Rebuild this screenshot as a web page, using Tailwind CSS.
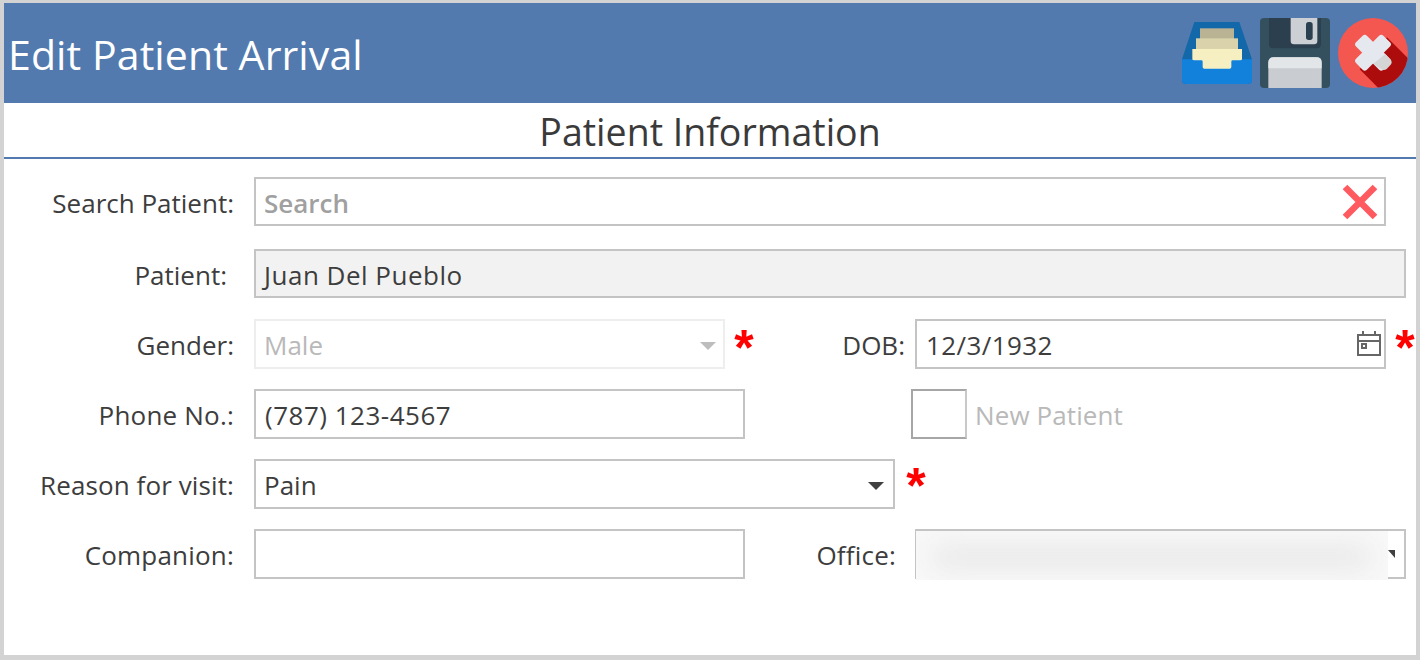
<!DOCTYPE html>
<html lang="en">
<head>
    <meta charset="UTF-8">
    <title>Edit Patient Arrival</title>
    <script src="https://cdn.jsdelivr.net/npm/@tailwindcss/browser@4"></script>
</head>
<body class="bg-[#d3d3d3] font-['Open_Sans',sans-serif] text-[#3d3d3d] overflow-hidden">
    <div class="mt-[3px] mx-[4px] h-[652px] w-[1412px] bg-white overflow-hidden">

        <!-- Header -->
        <div class="h-[100px] bg-[#527aae] flex items-center pl-[4px] pr-[8px]">
            <h1 class="text-[41px] leading-none text-white pt-[3px] tracking-[0.1px]">Edit Patient Arrival</h1>
            <div class="ml-auto flex items-center gap-[8px]">
                <button>
                    <svg width="70" height="62" viewBox="66 66 210 186" class="block">
                        <path d="M103 66H238L276 178V240Q276 252 264 252H78Q66 252 66 240V178Z" fill="#1268a8"/>
                        <rect x="120" y="85" width="102" height="32" fill="#b9b293"/>
                        <rect x="108" y="115" width="126" height="34" fill="#d9d2aa"/>
                        <path d="M66 178H276V240Q276 252 264 252H78Q66 252 66 240Z" fill="#1281dc"/>
                        <path d="M97 147H246V178Q246 181 240 181H218Q214 181 214 185V201Q214 206 209 206H133Q128 206 128 201V185Q128 181 124 181H103Q97 181 97 178Z" fill="#f5efc2"/>
                    </svg>
                </button>
                <button>
                    <svg width="70" height="70" viewBox="300 54 210 210" class="block">
                        <rect x="300" y="54" width="210" height="210" rx="12" fill="#34505f"/>
                        <path d="M327 54H483V133Q483 145 471 145H339Q327 145 327 133Z" fill="#2c3f4e"/>
                        <path d="M392 54H472V123Q472 133 462 133H402Q392 133 392 123Z" fill="#ccd0d4"/>
                        <rect x="438" y="66" width="20" height="54" rx="8" fill="#2c3f4e"/>
                        <path d="M325 264V188Q325 172 341 172H469Q485 172 485 188V264Z" fill="#c9cdd1"/>
                        <path d="M325 205V188Q325 172 341 172H469Q485 172 485 188V205Z" fill="#e2e6e8"/>
                    </svg>
                </button>
                <button>
                    <svg width="70" height="70" viewBox="533 54 210 210" class="block">
                        <defs><clipPath id="circleClip"><circle cx="638" cy="159" r="105"/></clipPath></defs>
                        <circle cx="638" cy="159" r="105" fill="#f45750"/>
                        <path d="M680 112L790 222L690 300L598 208Z" fill="#ad0c0c" clip-path="url(#circleClip)"/>
                        <rect x="580" y="135" width="116" height="46" rx="9" fill="#e5e8ef" transform="rotate(45 638 158)"/>
                        <rect x="580" y="135" width="116" height="46" rx="9" fill="#e5e8ef" transform="rotate(-45 638 158)"/>
                        <path d="M639 191L675 162L691 179Q697 187 691 194L679 207Q671 213 662 207Z" fill="#d5d5d5"/>
                    </svg>
                </button>
            </div>
        </div>

        <!-- Section title -->
        <div class="h-[56px] border-b-2 border-[#527aae] flex items-center justify-center">
            <h2 class="text-[37.5px] leading-none text-[#3a3a3a] pt-[3px]">Patient Information</h2>
        </div>

        <!-- Form -->
        <div class="text-[26px] leading-none">
            <div class="flex items-center h-[49px] mt-[18px]">
                <label class="w-[230px] text-right pt-[2px]">Search Patient:</label>
                <div class="relative ml-[20px] w-[1132px] h-full border-2 border-[#c4c4c4] flex items-center pl-[8px] pt-[2px] font-semibold text-[#a0a0a0]">
                    Search
                    <svg width="36" height="36" viewBox="0 0 36 36" class="absolute right-[6px] top-[5px]">
                        <path d="M3 3L33 33M33 3L3 33" stroke="#ff5a5f" stroke-width="6.5" fill="none"/>
                    </svg>
                </div>
            </div>

            <div class="flex items-center h-[49px] mt-[23px]">
                <label class="w-[223px] text-right pt-[2px]">Patient:</label>
                <div class="ml-[27px] w-[1152px] h-full border-2 border-[#c4c4c4] bg-[#f2f2f2] flex items-center pl-[8px] pt-[2px] tracking-[0.5px]">Juan Del Pueblo</div>
            </div>

            <div class="flex items-center h-[50px] mt-[21px]">
                <label class="w-[230px] text-right pt-[2px]">Gender:</label>
                <div class="relative ml-[20px] w-[471px] h-full border-2 border-[#eeeeee] flex items-center pl-[8px] pt-[2px] text-[#b9b9b9]">
                    Male
                    <span class="absolute right-[7px] top-[21px] w-0 h-0 border-x-[8px] border-x-transparent border-t-[8px] border-t-[#bdbdbd]"></span>
                </div>
                <span class="ml-[9px] w-[20px] h-[20px] flex items-center justify-center text-[50px] leading-none font-bold text-[#ff0000] font-['Liberation_Sans',sans-serif] pt-[7px]">*</span>
                <label class="w-[151px] text-right text-nowrap pt-[2px]">DOB:</label>
                <div class="relative ml-[10px] w-[471px] h-full border-2 border-[#c4c4c4] flex items-center pl-[9px] pt-[2px] tracking-[0.4px]">
                    12/3/1932
                    <svg width="24" height="26" viewBox="0 0 24 26" class="absolute right-[3px] top-[9px]" fill="none" stroke="#666" stroke-width="2">
                        <path d="M1 5H23V25H1ZM1 11H23M6 1V6M18 1V6"/>
                        <rect x="5" y="14" width="4" height="4"/>
                    </svg>
                </div>
                <span class="ml-[9px] w-[20px] h-[20px] flex items-center justify-center text-[50px] leading-none font-bold text-[#ff0000] font-['Liberation_Sans',sans-serif] pt-[7px]">*</span>
            </div>

            <div class="flex items-center h-[50px] mt-[20px]">
                <label class="w-[230px] text-right pt-[2px] tracking-[0.2px]">Phone No.:</label>
                <div class="ml-[20px] w-[491px] h-full border-2 border-[#c4c4c4] flex items-center pl-[9px] pt-[2px] tracking-[0.5px]">(787) 123-4567</div>
                <div class="ml-[166px] w-[56px] h-full border-2 border-[#a6a6a6] border-r-[#c9c9c9]"></div>
                <span class="ml-[8px] pt-[2px] text-[#b9b9b9] tracking-[0.1px]">New Patient</span>
            </div>

            <div class="flex items-center h-[50px] mt-[20px]">
                <label class="w-[230px] text-right pt-[2px] tracking-[0.1px]">Reason for visit:</label>
                <div class="relative ml-[20px] w-[641px] h-full border-2 border-[#c4c4c4] flex items-center pl-[8px] pt-[2px]">
                    Pain
                    <span class="absolute right-[9px] top-[21px] w-0 h-0 border-x-[8px] border-x-transparent border-t-[8px] border-t-[#404040]"></span>
                </div>
                <span class="ml-[11px] w-[20px] h-[20px] flex items-center justify-center text-[50px] leading-none font-bold text-[#ff0000] font-['Liberation_Sans',sans-serif] pt-[3px]">*</span>
            </div>

            <div class="flex items-center h-[50px] mt-[20px]">
                <label class="w-[230px] text-right pt-[2px] tracking-[0.2px]">Companion:</label>
                <div class="ml-[20px] w-[491px] h-full border-2 border-[#c4c4c4]"></div>
                <label class="w-[151px] text-right pt-[2px] tracking-[0.2px]">Office:</label>
                <div class="relative ml-[19px] w-[491px] h-full border-2 border-[#c4c4c4]">
                    <span class="absolute right-[9px] top-[19px] w-0 h-0 border-l-[7px] border-l-transparent border-t-[8px] border-t-[#404040]"></span>
                    <!-- blurred out office name -->
                    <div class="absolute left-[-1px] top-[0px] w-[472px] h-[49px] bg-[#f8f8f8] overflow-hidden">
                        <div class="mt-[14px] mx-[16px] h-[24px] rounded-full bg-[#e9e9e9] blur-md"></div>
                    </div>
                </div>
            </div>
        </div>
    </div>
</body>
</html>
